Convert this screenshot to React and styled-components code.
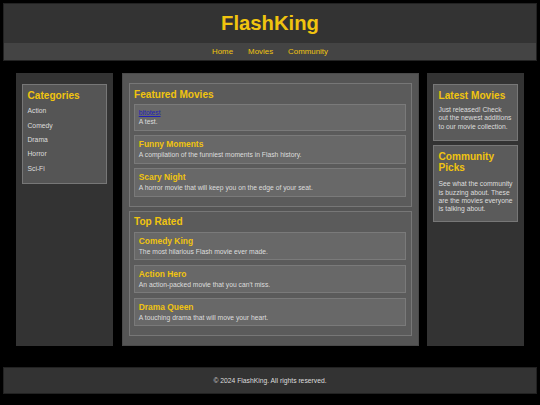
import React from "react";
import styled, { createGlobalStyle } from "styled-components";

const GlobalStyle = createGlobalStyle`
  html, body {
    margin: 0;
    padding: 0;
    background-color: #000;
  }
  body {
    padding: 3px;
    font-family: "Liberation Sans", Arial, sans-serif;
    font-size: 6.75px;
    color: #ddd;
  }
  * {
    box-sizing: border-box;
  }
`;

const gold = "#f1c40f";

const Header = styled.header`
  background-color: #333;
  border: 1px solid #222;
`;

const Title = styled.h1`
  margin: 0;
  padding: 8px 0 8px;
  text-align: center;
  font-size: 20.25px;
  line-height: 23px;
  color: ${gold};
`;

const Nav = styled.nav`
  display: flex;
  justify-content: center;
  gap: 15px;
  background-color: #444;
  padding: 4px 0;
`;

const NavLink = styled.a`
  color: ${gold};
  font-size: 7.9px;
  line-height: 9px;
  text-decoration: none;
`;

const Main = styled.main`
  display: flex;
  align-items: stretch;
  gap: 8.5px;
  margin: 12px 13px 21px;
`;

const Sidebar = styled.aside`
  width: 97px;
  flex-shrink: 0;
  background-color: #333;
  padding: 11px 6px;
`;

const Content = styled.section`
  flex: 1;
  background-color: #555;
  border: 1px solid #4a4a4a;
  padding: 9px 6px;
`;

const Box = styled.div`
  background-color: ${(p) => (p.$light ? "#5b5b5b" : "#555")};
  border: 1px solid #777;
  padding: 4.5px;
  margin-bottom: 4px;

  &:last-child {
    margin-bottom: 0;
  }
`;

const BoxTitle = styled.h2`
  margin: 0 0 ${(p) => p.$gap || 4}px;
  font-size: 10.1px;
  line-height: 11.6px;
  color: ${gold};
`;

const CategoryList = styled.ul`
  list-style: none;
  margin: 0;
  padding: 0 0 3px;
`;

const CategoryItem = styled.li`
  padding: 3.25px 0;
  line-height: 7.8px;
  color: #ddd;
`;

const SideText = styled.p`
  margin: ${(p) => p.$top || 5}px 0 ${(p) => p.$bottom || 5}px;
  line-height: 8.2px;
  color: #ddd;
`;

const Card = styled.article`
  background-color: #686868;
  border: 1px solid #7a7a7a;
  padding: 3.75px;
  margin-bottom: 4.5px;
`;

const CardTitle = styled.h3`
  margin: 0 0 1.5px;
  font-size: 8.44px;
  line-height: 9.7px;
  color: ${gold};
`;

const CardLink = styled.a`
  display: block;
  margin-bottom: 1.5px;
  line-height: 7.8px;
  color: #1f1fb8;
  text-decoration: underline;
`;

const CardText = styled.p`
  margin: 0;
  line-height: 7.8px;
  color: #ddd;
`;

const Footer = styled.footer`
  background-color: #333;
  border: 1px solid #222;
  padding: 8.5px 0;
  text-align: center;
  line-height: 7.8px;
  color: #ddd;
`;

const featured = [
  { title: "Funny Moments", text: "A compilation of the funniest moments in Flash history." },
  { title: "Scary Night", text: "A horror movie that will keep you on the edge of your seat." },
];

const topRated = [
  { title: "Comedy King", text: "The most hilarious Flash movie ever made." },
  { title: "Action Hero", text: "An action-packed movie that you can't miss." },
  { title: "Drama Queen", text: "A touching drama that will move your heart." },
];

const categories = ["Action", "Comedy", "Drama", "Horror", "Sci-Fi"];

const App = () => {
  return (
    <>
      <GlobalStyle />
      <Header>
        <Title>FlashKing</Title>
        <Nav>
          <NavLink href="#">Home</NavLink>
          <NavLink href="#">Movies</NavLink>
          <NavLink href="#">Community</NavLink>
        </Nav>
      </Header>

      <Main>
        <Sidebar>
          <Box>
            <BoxTitle $gap={3}>Categories</BoxTitle>
            <CategoryList>
              {categories.map((c) => (
                <CategoryItem key={c}>{c}</CategoryItem>
              ))}
            </CategoryList>
          </Box>
        </Sidebar>

        <Content>
          <Box $light>
            <BoxTitle>Featured Movies</BoxTitle>
            <Card>
              <CardLink href="#">bitotest</CardLink>
              <CardText>A test.</CardText>
            </Card>
            {featured.map((m) => (
              <Card key={m.title}>
                <CardTitle>{m.title}</CardTitle>
                <CardText>{m.text}</CardText>
              </Card>
            ))}
          </Box>
          <Box $light>
            <BoxTitle>Top Rated</BoxTitle>
            {topRated.map((m) => (
              <Card key={m.title}>
                <CardTitle>{m.title}</CardTitle>
                <CardText>{m.text}</CardText>
              </Card>
            ))}
          </Box>
        </Content>

        <Sidebar>
          <Box $light>
            <BoxTitle>Latest Movies</BoxTitle>
            <SideText>
              Just released! Check out the newest additions to our movie collection.
            </SideText>
          </Box>
          <Box $light>
            <BoxTitle>Community Picks</BoxTitle>
            <SideText $top={6.5} $bottom={3.5}>
              See what the community is buzzing about. These are the movies everyone is
              talking about.
            </SideText>
          </Box>
        </Sidebar>
      </Main>

      <Footer>© 2024 FlashKing. All rights reserved.</Footer>
    </>
  );
};

export default App;
